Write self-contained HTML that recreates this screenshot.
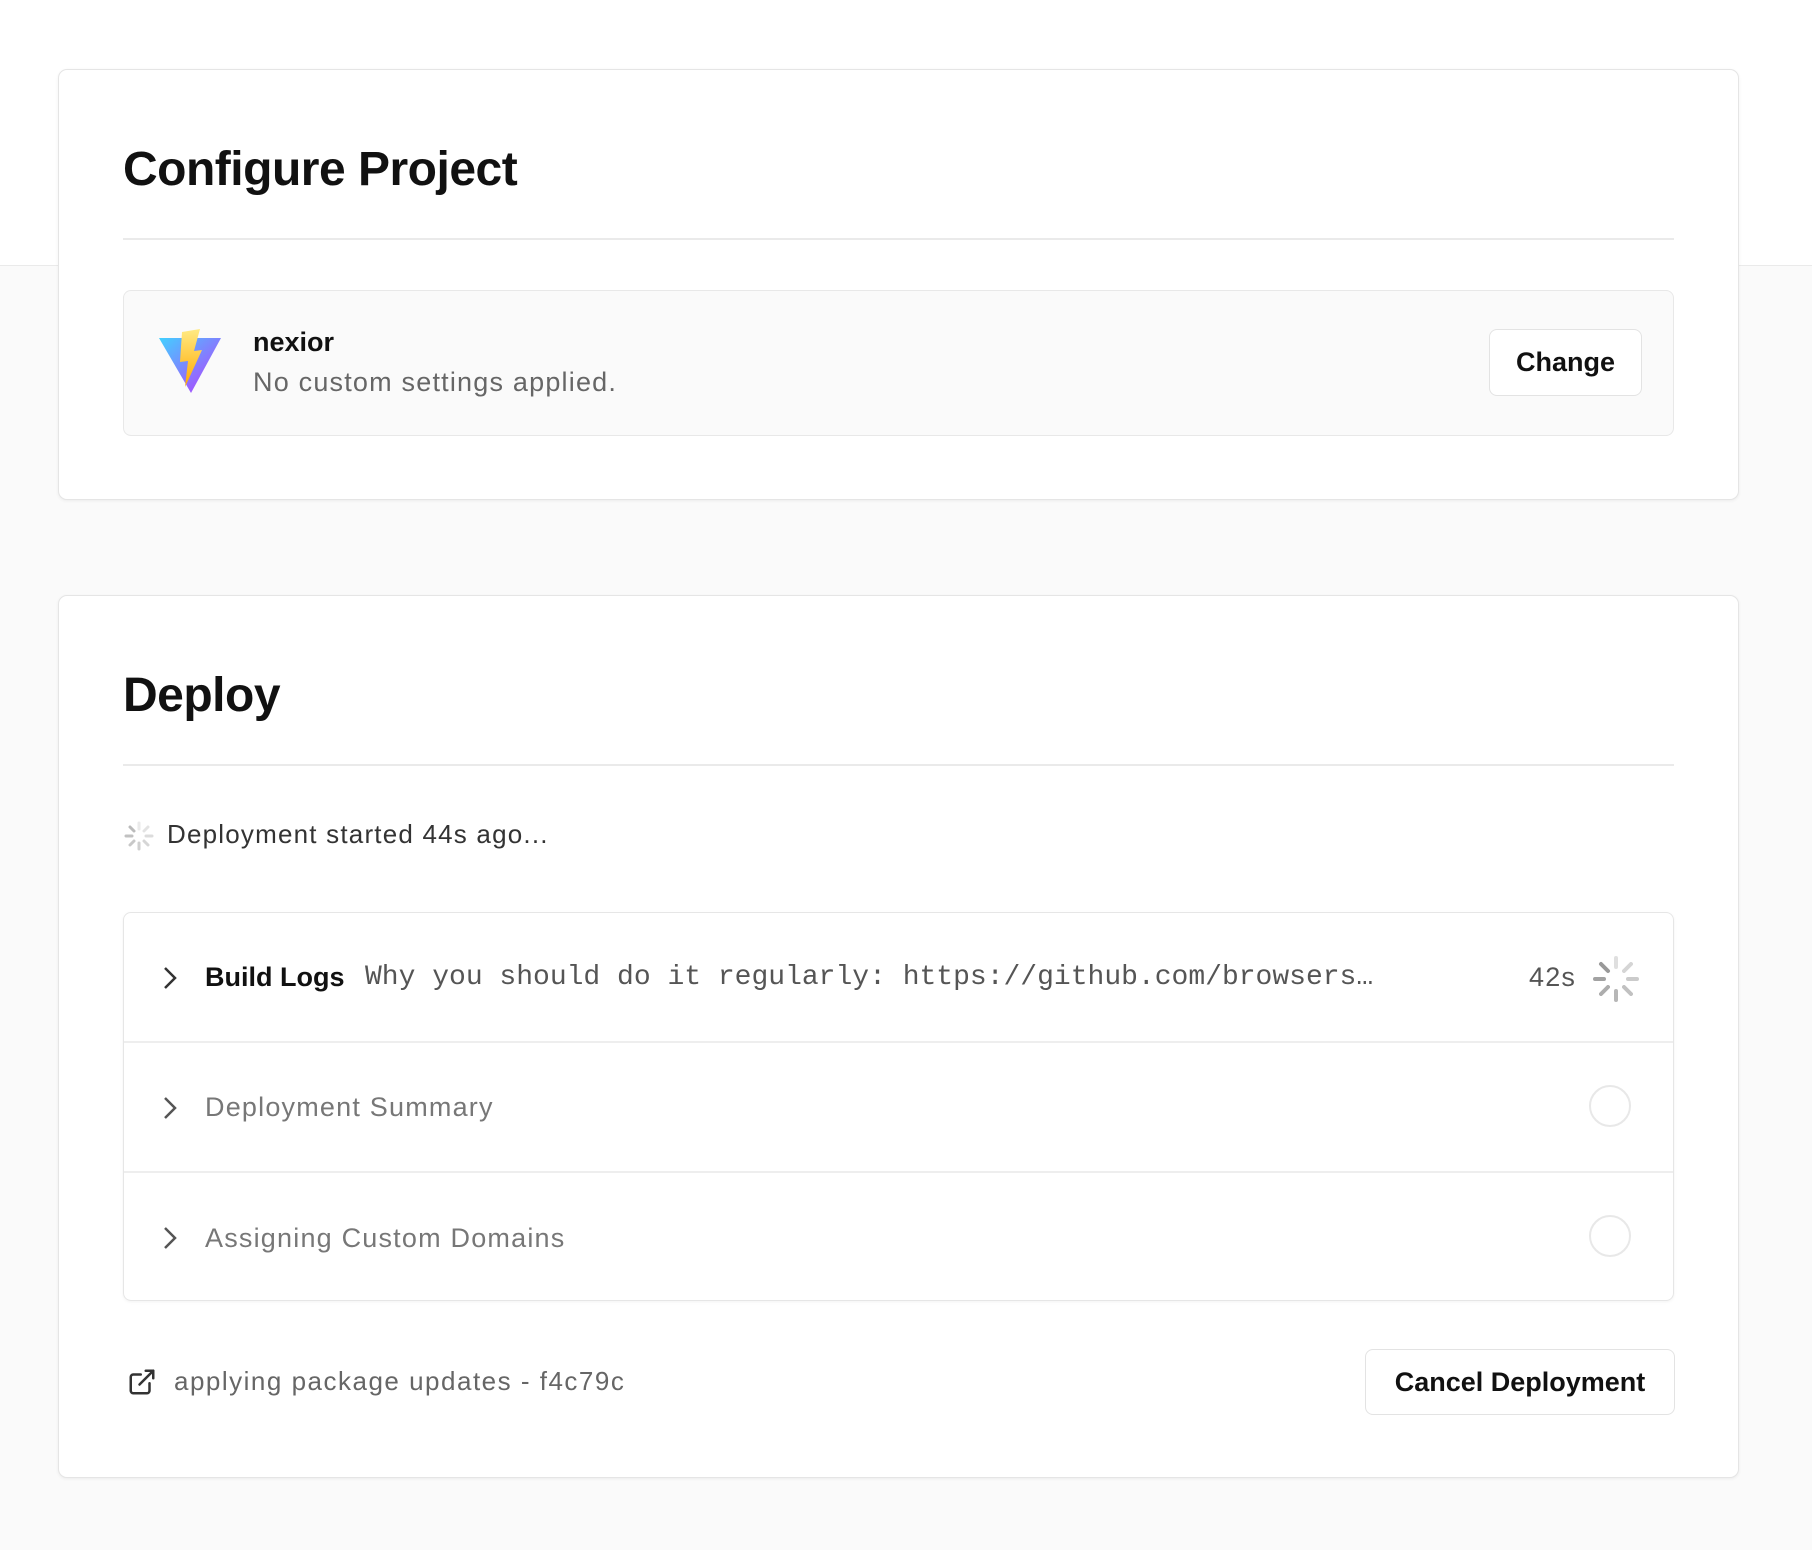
<!DOCTYPE html>
<html><head><meta charset="utf-8"><style>
*{box-sizing:border-box;margin:0;padding:0}
body{width:1812px;height:1550px;background:#fafafa;font-family:"Liberation Sans",sans-serif;position:relative;overflow:hidden;color:#111}
.band{position:absolute;left:0;top:0;width:1812px;height:266px;background:#fff;border-bottom:1px solid #eaeaea}
.card{position:absolute;left:58px;width:1681px;background:#fff;border:1px solid #e5e5e5;border-radius:9px;box-shadow:0 1px 3px rgba(0,0,0,.06)}
.abs{position:absolute}
h1{position:absolute;left:64px;font-size:48px;font-weight:bold;color:#111;letter-spacing:-0.5px}
.div{position:absolute;left:64px;width:1551px;height:2px;background:#eaeaea}
.btn{position:absolute;background:#fff;border:1px solid #e3e3e3;border-radius:8px;font-size:27px;font-weight:bold;display:flex;align-items:center;justify-content:center;color:#111}
.row{position:absolute;left:0;width:100%;height:130px;display:flex;align-items:center}
.lbl{position:absolute;left:81px;font-size:27px}
.sp{letter-spacing:1.2px}
.circ{position:absolute;left:1465px;width:42px;height:42px;border:2px solid #e8e8e8;border-radius:50%}
</style></head><body>
<div class="band"></div>
<div class="card" style="top:69px;height:431px">
 <h1 style="top:72px">Configure Project</h1>
 <div class="div" style="top:168px"></div>
 <div class="abs" style="left:64px;top:220px;width:1551px;height:146px;background:#fafafa;border:1px solid #e8e8e8;border-radius:8px">
  <svg class="abs" style="left:34px;top:38px" width="64" height="64" viewBox="0 0 64 64">
   <defs><linearGradient id="g1" x1="0" y1="0" x2="1" y2="1"><stop offset="0" stop-color="#41d1ff"/><stop offset="1" stop-color="#bd34fe"/></linearGradient>
   <linearGradient id="g2" x1="0" y1="0" x2="0" y2="1"><stop offset="0" stop-color="#ffea83"/><stop offset="1" stop-color="#ffa800"/></linearGradient></defs>
   <path d="M1 9 L63 9 L33 64 Z" fill="url(#g1)"/>
   <path d="M24 3 L42 0 L36 22 L44 21 L27 58 L30 32 L22 33 Z" fill="url(#g2)"/>
  </svg>
  <div class="abs" style="left:129px;top:36px;font-size:27px;font-weight:bold">nexior</div>
  <div class="abs sp" style="left:129px;top:76px;font-size:27px;color:#666">No custom settings applied.</div>
  <div class="btn" style="left:1365px;top:38px;width:153px;height:67px">Change</div>
 </div>
</div>
<div class="card" style="top:595px;height:883px">
 <h1 style="top:72px">Deploy</h1>
 <div class="div" style="top:168px"></div>
 <svg class="abs" style="left:64px;top:224px" width="32" height="32" viewBox="-16 -16 32 32" stroke-linecap="round" stroke-width="3">
  <g stroke="#bbb"><line x1="0" y1="-13" x2="0" y2="-7" opacity=".3"/><line x1="9" y1="-9" x2="5" y2="-5" opacity=".4"/><line x1="13" y1="0" x2="7" y2="0" opacity=".5"/><line x1="9" y1="9" x2="5" y2="5" opacity=".6"/><line x1="0" y1="13" x2="0" y2="7" opacity=".7"/><line x1="-9" y1="9" x2="-5" y2="5" opacity=".8"/><line x1="-13" y1="0" x2="-7" y2="0" opacity=".9"/><line x1="-9" y1="-9" x2="-5" y2="-5"/></g>
 </svg>
 <div class="abs sp" style="left:108px;top:223px;font-size:26px;color:#333">Deployment started 44s ago...</div>
 <div class="abs" style="left:64px;top:316px;width:1551px;height:389px;border:1px solid #e6e6e6;border-radius:8px;box-shadow:0 1px 3px rgba(0,0,0,.05)">
  <div class="row" style="top:0;border-bottom:2px solid #eee">
   <svg class="abs" style="left:36px;top:53px" width="20" height="24" viewBox="0 0 20 24"><path d="M5 2 L15 12 L5 22" fill="none" stroke="#333" stroke-width="2.5"/></svg>
   <div class="lbl" style="font-weight:bold;color:#111">Build Logs</div>
   <div class="abs" style="left:241px;font-family:'Liberation Mono',monospace;font-size:28px;color:#555">Why you should do it regularly: https://github.com/browsers…</div>
   <div class="abs sp" style="left:1405px;font-size:27px;color:#555">42s</div>
   <svg class="abs" style="left:1468px;top:42px" width="48" height="48" viewBox="-24 -24 48 48" stroke-linecap="round" stroke-width="4">
    <g stroke="#999"><line x1="0" y1="-21" x2="0" y2="-12" opacity=".3"/><line x1="15" y1="-15" x2="8" y2="-8" opacity=".4"/><line x1="21" y1="0" x2="12" y2="0" opacity=".5"/><line x1="15" y1="15" x2="8" y2="8" opacity=".6"/><line x1="0" y1="21" x2="0" y2="12" opacity=".7"/><line x1="-15" y1="15" x2="-8" y2="8" opacity=".8"/><line x1="-21" y1="0" x2="-12" y2="0" opacity=".9"/><line x1="-15" y1="-15" x2="-8" y2="-8"/></g>
   </svg>
  </div>
  <div class="row" style="top:130px;border-bottom:2px solid #eee">
   <svg class="abs" style="left:36px;top:53px" width="20" height="24" viewBox="0 0 20 24"><path d="M5 2 L15 12 L5 22" fill="none" stroke="#555" stroke-width="2.5"/></svg>
   <div class="lbl sp" style="color:#777">Deployment Summary</div>
   <div class="circ" style="top:42px"></div>
  </div>
  <div class="row" style="top:260px">
   <svg class="abs" style="left:36px;top:53px" width="20" height="24" viewBox="0 0 20 24"><path d="M5 2 L15 12 L5 22" fill="none" stroke="#555" stroke-width="2.5"/></svg>
   <div class="lbl sp" style="color:#777">Assigning Custom Domains</div>
   <div class="circ" style="top:42px"></div>
  </div>
 </div>
 <svg class="abs" style="left:68px;top:771px" width="30" height="30" viewBox="0 0 24 24" fill="none" stroke="#333" stroke-width="2" stroke-linecap="round" stroke-linejoin="round"><path d="M18 13v6a2 2 0 0 1-2 2H5a2 2 0 0 1-2-2V8a2 2 0 0 1 2-2h6"/><path d="M15 3h6v6"/><path d="M10 14L21 3"/></svg>
 <div class="abs" style="left:115px;top:770px;font-size:26px;color:#666;letter-spacing:1.5px">applying package updates - f4c79c</div>
 <div class="btn" style="left:1306px;top:753px;width:310px;height:66px">Cancel Deployment</div>
</div>
</body></html>
